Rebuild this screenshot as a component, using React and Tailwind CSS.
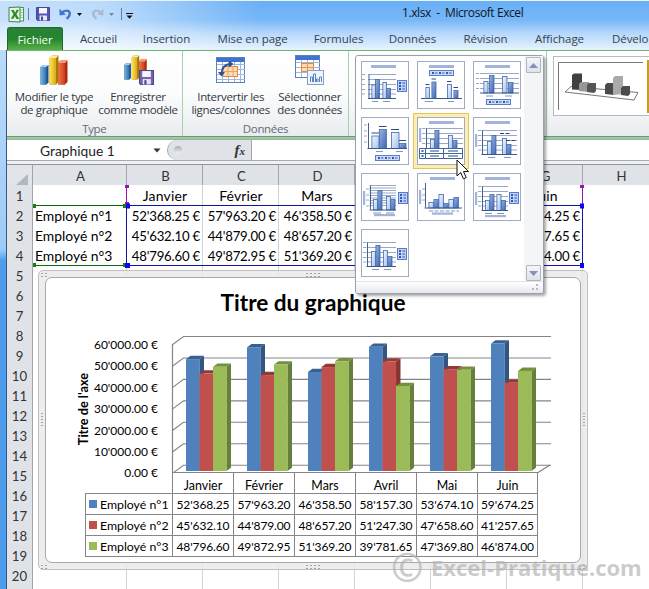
import React from "react";

const BLUE = "#4f81bd";
const RED = "#c0504d";
const GREEN = "#9bbb59";

const months = ["Janvier", "Février", "Mars", "Avril", "Mai", "Juin"];
const series = [
  { name: "Employé n°1", color: BLUE, top: "#3a608f", side: "#34557f", values: [52368.25, 57963.2, 46358.5, 58157.3, 53674.1, 59674.25] },
  { name: "Employé n°2", color: RED, top: "#913a38", side: "#843432", values: [45632.1, 44879.0, 48657.2, 51247.3, 47658.6, 41257.65] },
  { name: "Employé n°3", color: GREEN, top: "#748f3f", side: "#65803a", values: [48796.6, 49872.95, 51369.2, 39781.65, 47369.8, 46874.0] },
];

function money(v) {
  const [int, dec] = v.toFixed(2).split(".");
  return int.replace(/(\d)(?=(\d{3})+$)/g, "$1'") + "." + dec;
}

/* ---------- title bar ---------- */

function ExcelLogo() {
  return (
    <svg width="17" height="17" viewBox="0 0 17 17">
      <rect x="4.5" y="1.5" width="11" height="13.500" fill="#fff" stroke="#4d9b51" />
      <path d="M11 4h4M11 6.5h4M11 9h4M11 11.5h4" stroke="#8cc48d" />
      <path d="M1 1.500L12 1v15L1 15.500z" fill="#e7f4e3" stroke="#3c8a40" />
      <path d="M3 4h2.8l1.3 2.7L8.7 3.7h2.4L8.4 8.2l2.8 4.8H8.5L6.9 10l-1.5 2.7H2.8l2.7-4.5z" fill="#2a8a34" />
    </svg>
  );
}

function Floppy({ size, color = "#5553b5" }) {
  return (
    <svg width={size} height={size} viewBox="0 0 14 14">
      <path d="M.5.5h13v13h-12l-1-1z" fill={color} stroke="#4a479b" />
      <rect x="3" y="1" width="8" height="5.5" fill="#f4f6fd" />
      <rect x="3.5" y="8.5" width="7.5" height="5" fill="#e6e8f6" />
      <rect x="5" y="9.5" width="2" height="4" fill="#47449a" />
    </svg>
  );
}

function UndoArrow({ color, flip }) {
  return (
    <svg width="13" height="12" viewBox="0 0 13 12" className={flip ? "-scale-x-100" : ""}>
      <path d="M2.5 5.2C5 2 10.8 1.5 10.8 5.6c0 2-1.4 3.8-3.2 5.2" fill="none" stroke={color} strokeWidth="2.4" />
      <path d="M.4.8l.3 6.6 6.2-.8z" fill={color} />
    </svg>
  );
}

function Caret({ color = "#111" }) {
  return (
    <svg width="5" height="3" viewBox="0 0 5 3">
      <path d="M0 0h5L2.5 3z" fill={color} />
    </svg>
  );
}

function TitleBar() {
  return (
    <div className="flex h-[27px] shrink-0 items-center pt-px">
      <div className="flex w-[395px] items-center pl-2">
        <ExcelLogo />
        <span className="ml-[3px] h-3 w-px bg-[#5f7f9f]" />
        <span className="ml-[7px]"><Floppy size="14" /></span>
        <span className="ml-[9px]"><UndoArrow color="#3f74cf" /></span>
        <span className="ml-[5px]"><Caret /></span>
        <span className="ml-[9px]"><UndoArrow color="#aeb9c8" flip /></span>
        <span className="ml-[5px]"><Caret color="#76899e" /></span>
        <span className="ml-[7px] h-3 w-px bg-[#5f7f9f]" />
        <span className="ml-1 pt-1">
          <svg width="7" height="6" viewBox="0 0 7 6">
            <path d="M0 .5h7" stroke="#111" />
            <path d="M.5 2.5h6L3.500 5.800z" fill="#111" />
          </svg>
        </span>
      </div>
      <div className="pb-0.5 pl-[7px] text-[12px] tracking-[-0.035em] whitespace-pre text-[#10151c]">1.xlsx  -  Microsoft Excel</div>
    </div>
  );
}

function Tabs() {
  return (
    <div className="flex h-[23px] shrink-0 overflow-hidden pl-[7px] text-center text-[11.5px] leading-[24px] tracking-[-0.005em] whitespace-nowrap text-[#35424f]">
      <div className="w-[56px] shrink-0 rounded-t-[3px] border border-b-0 border-[#1d6b2a] bg-linear-to-b from-[#2c7f36] via-[#23862c] to-[#58b14a] text-white">Fichier</div>
      <div className="w-[71px] shrink-0">Accueil</div>
      <div className="w-[65px] shrink-0">Insertion</div>
      <div className="w-[107px] shrink-0">Mise en page</div>
      <div className="w-[65px] shrink-0">Formules</div>
      <div className="w-[83px] shrink-0">Données</div>
      <div className="w-[63px] shrink-0">Révision</div>
      <div className="w-[85px] shrink-0">Affichage</div>
      <div className="shrink-0 pl-2.5">Développeur</div>
    </div>
  );
}

/* ---------- ribbon ---------- */

function Bars3D({ size = 30 }) {
  return (
    <svg width={size} height={size} viewBox="0 0 30 30">
      <defs>
        <linearGradient id="rb" x2="1"><stop offset="0" stopColor="#7db5e6" /><stop offset="1" stopColor="#2f6fae" /></linearGradient>
        <linearGradient id="ry" x2="1"><stop offset="0" stopColor="#ffe45a" /><stop offset="1" stopColor="#dca814" /></linearGradient>
        <linearGradient id="rr" x2="1"><stop offset="0" stopColor="#f5784c" /><stop offset="1" stopColor="#d23a1c" /></linearGradient>
      </defs>
      <path d="M1.500 12l2-2h6v17.500l-2 2h-6z" fill="#1f4f83" />
      <path d="M1.500 12h6v17.500h-6z" fill="url(#rb)" />
      <path d="M1.500 12l2-2h6l-2 2z" fill="#a8d0f2" />
      <path d="M19 8l2.500-2.500H28.500V27L26 29.500h-7z" fill="#a92c12" />
      <path d="M19 8h7v21.500h-7z" fill="url(#rr)" />
      <path d="M19 8l2.500-2.500h7L26 8z" fill="#fa9a72" />
      <path d="M10.500 3L13 .500h6.500V27L17 29.500h-6.500z" fill="#a67c08" />
      <path d="M10.500 3H17v26.500h-6.500z" fill="url(#ry)" />
      <path d="M10.500 3L13 .500h6.500L17 3z" fill="#fff19a" />
    </svg>
  );
}

function SaveTemplateIcon() {
  return (
    <div className="relative h-[31px] w-[31px]">
      <Bars3D size={25} />
      <div className="absolute top-[15px] left-[16px]"><Floppy size="15" color="#7a62ad" /></div>
    </div>
  );
}

function SheetGlyph({ w, h, children }) {
  return (
    <>
      <rect x=".5" y=".5" width={w} height={h} fill="#fff" stroke="#5b7fc0" />
      <path d={`M1 7.5h${w}M1 12.500h${w}M1 17.500h${w}M6.500 5v${h - 5}M12.500 5v${h - 5}M18.500 5v${h - 5}`} stroke="#9db8de" />
      <rect x="1" y="1" width={w - 1} height="4" fill="#3f73cf" />
      {children}
    </>
  );
}

function SwapIcon() {
  return (
    <svg width="30" height="28" viewBox="0 0 30 28">
      <SheetGlyph w={28} h={25}>
        <path d="M1 22.500h28M24.500 5v20" stroke="#9db8de" />
        <rect x="7" y="9.500" width="14.500" height="10" fill="#fbdcb6" stroke="#e58a3a" />
        <path d="M7 14.500h14M12 10v9M17 10v9" stroke="#eda566" />
        <path d="M5.500 16.500C6 10 9.500 7.300 14.500 7" fill="none" stroke="#28529b" strokeWidth="1.800" />
        <path d="M2 15h7l-3.500 4.500zM13 3.500v7L17.500 7z" fill="#28529b" />
      </SheetGlyph>
    </svg>
  );
}

function SelectIcon() {
  return (
    <svg width="30" height="31" viewBox="0 0 30 31">
      <SheetGlyph w={24} h={22}>
        <rect x="6.500" y="8.500" width="12" height="8" fill="#fbdcb6" stroke="#e58a3a" />
        <path d="M7 12.500h12M12.500 9v8" stroke="#e9964c" />
      </SheetGlyph>
      <rect x="12.500" y="15.500" width="16" height="14" fill="#eef4fc" stroke="#8ba0c0" />
      <path d="M15.500 27v-5h2v5M18.500 27v-8h2v8M21.500 27v-3h1.500v3M24.500 27v-5h2v5" fill="none" stroke="#5b83c2" />
    </svg>
  );
}

function BigButton({ className, icon, lines }) {
  return (
    <div className={"flex flex-col items-center " + className}>
      <div className="flex h-[35px] items-start">{icon}</div>
      {lines.map((l) => (
        <div key={l} className="h-[13px] leading-[13px] whitespace-nowrap">{l}</div>
      ))}
    </div>
  );
}

function RibbonGroup({ className, title, children }) {
  return (
    <div className={"flex flex-col border-r border-[#a9cfae] pt-1 " + className}>
      <div className="flex">{children}</div>
      <div className="mt-1 text-center leading-[17px] text-[#646b78]">{title}</div>
    </div>
  );
}

function StyleGallery() {
  return (
    <div className="mt-[5px] ml-[6px] flex h-[60px] flex-1 border border-r-0 border-[#b4bac2] bg-white pt-1 pl-1">
      <svg width="89" height="50" viewBox="0 0 89 50">
        <path d="M.5 49V1.500H85" fill="none" stroke="#777" />
        <path d="M13 25.500l-6 5.500 69 8 4-7.500z" fill="#fff" stroke="#777" />
        <path d="M14 14l2-1.500h8v16.500l-10-.500z" fill="#414141" />
        <path d="M21 23l2-2h8v10l-10-1z" fill="#989898" />
        <path d="M29 24l2-2h7v8l-2 2-7-1z" fill="#555" />
        <path d="M47 24l2-2h7v12l-9-1z" fill="#4a4a4a" />
        <path d="M55 17l2-2h8v18l-10 1z" fill="#aaa" />
        <path d="M63 27l2-2h7v8l-2 2-7-1z" fill="#4c4c4c" />
      </svg>
      <div className="h-[53px] w-0.5 -translate-y-px bg-[#c99a25]" />
    </div>
  );
}

function Ribbon() {
  return (
    <div className="flex h-[89px] shrink-0 flex-col border-t border-[#6cb56c]">
      <div className="flex h-[85px] bg-linear-to-b from-white via-[#fbfcfc] to-[#e9ecef] text-[11.5px] tracking-[-0.03em] text-[#33373f]">
        <RibbonGroup className="w-[176px]" title="Type">
          <BigButton className="w-[94px]" icon={<Bars3D size={30} />} lines={["Modifier le type", "de graphique"]} />
          <BigButton className="w-[74px]" icon={<SaveTemplateIcon />} lines={["Enregistrer", "comme modèle"]} />
        </RibbonGroup>
        <RibbonGroup className="w-[167px]" title="Données">
          <BigButton className="-mb-0.5 h-[61px] w-[96px] pt-0.5" icon={<div className="-mb-0.5"><SwapIcon /></div>} lines={["Intervertir les", "lignes/colonnes"]} />
          <BigButton className="w-[62px]" icon={<SelectIcon />} lines={["Sélectionner", "des données"]} />
        </RibbonGroup>
        <div className="w-[198px] border-r border-[#a9cfae]" />
        <StyleGallery />
      </div>
      <div className="h-[3px] border-t border-[#679f6e] bg-[#9bcb9f]" />
    </div>
  );
}

function FormulaBar() {
  return (
    <div className="flex h-[26px] shrink-0 flex-col bg-[#eef0f4]">
      <div className="flex h-[22px] border-y border-[#a4a8b0] bg-white">
        <div className="flex w-[160px] items-center justify-between pr-[6px] pl-[33px] font-['Lato',sans-serif] text-[13.8px] text-[#222]">
          <span className="pt-0.5">Graphique 1</span>
          <svg width="8" height="5" viewBox="0 0 8 5"><path d="M.500 .500h7L4 4.500z" fill="#333" /></svg>
        </div>
        <div className="flex w-[85px] items-center justify-between rounded-l-full border-r border-l border-[#a4a8b0] bg-[#dfe2e7] pr-1.5 pl-1.5">
          <span className="h-2 w-2 rounded-full bg-linear-to-b from-[#a9adb4] to-[#f2f3f5]" />
          <span className="font-['Liberation_Serif',serif] text-[15px] leading-none font-bold text-[#333] italic">f<span className="text-[11px]">x</span></span>
        </div>
      </div>
      <div className="h-[4px] border-b border-[#90959d]" />
    </div>
  );
}

/* ---------- worksheet ---------- */

const cellGrid = "grid h-5 grid-cols-[26px_94px_76px_76px_76px_76px_76px_76px_76px]";

function Sheet() {
  const rows = Array.from({ length: 21 }, (_, i) => i + 1);
  return (
    <div className="w-[652px] shrink-0 font-['Lato',sans-serif] text-[13.2px] leading-[22px] whitespace-nowrap text-black">
      <div className={cellGrid}>
        <div className="flex items-end justify-end border-r border-b border-[#9ea5ae] bg-[#e1e4e9] pr-1 pb-[3px]">
          <svg width="12" height="11" viewBox="0 0 12 11"><path d="M12 0v11H0z" fill="#b3b8c0" /></svg>
        </div>
        {"ABCDEFGH".split("").map((c) => (
          <div key={c} className="border-r border-b border-[#9ea5ae] bg-[#dfe3e8] pl-0.5 text-center leading-[23px] text-[#333]">{c}</div>
        ))}
      </div>
      {rows.map((r) => (
        <div key={r} className={cellGrid}>
          <div className="border-r border-b border-[#9ea5ae] bg-[#dfe3e8] text-center text-[#333]">{r}</div>
          <div className="border-r border-b border-[#d0d3d8] bg-white pl-0.5 text-[13.9px]">{r > 1 && r < 5 ? series[r - 2].name : ""}</div>
          {months.map((m, i) => (
            <div key={m} className={"border-r border-b border-[#d0d3d8] bg-white " + (r === 1 ? "pl-px text-center text-[14px] tracking-[0.01em]" : "pr-0.5 text-right tracking-[-0.015em]")}>
              {r === 1 ? m : r < 5 ? money(series[r - 2].values[i]) + " €" : ""}
            </div>
          ))}
          <div className="border-r border-b border-[#d0d3d8] bg-white" />
        </div>
      ))}
    </div>
  );
}

/* Coloured outlines that mark the ranges feeding the chart */
function RangeOutlines() {
  return (
    <svg className="absolute top-[185px] left-[32px]" width="560" height="84" viewBox="0 0 560 84">
      <path d="M94.500 2v18M550.500 2v18" stroke="#9a13b0" />
      <path d="M93 0h4v3h-4zM93 17h4v3h-4zM548 0h4v3h-4z" fill="#9a13b0" />
      <path d="M2 20.500h92M2 80.500h92" stroke="#0c6b0c" />
      <path d="M1 19h3v4H1zM91 19h3v4h-3zM1 78h3v4H1zM91 78h3v4h-3z" fill="#168016" />
      <path d="M94.500 20.500h456v60h-456z" fill="none" stroke="#1414a0" />
      <path d="M94 18.500h4v5h-4zM93 78h5v5h-5zM548 18.500h4v5h-4zM548 78h4v5h-4z" fill="#0a0af0" />
    </svg>
  );
}

/* ---------- chart ---------- */

function Plot() {
  // Origin of the drawing is the top-left of the 3-D walls.
  const steps = [0, 1, 2, 3, 4, 5, 6];
  const base = 137;
  return (
    <svg width="382" height="139" viewBox="0 0 382 139" className="block shrink-0">
      {steps.map((i) => (
        <path key={i} d={`M2 ${11 + i * 21.45}L13.500 ${2.500 + i * 21.45}H381`} fill="none" stroke="#858585" strokeWidth="1.100" />
      ))}
      <path d="M2.500 10.500V139M2 138.500H368L380 131" fill="none" stroke="#858585" strokeWidth="1.200" />
      {months.map((m, g) =>
        series.map((s, k) => {
          const x = 16 + g * 61 + k * 13.500;
          const h = s.values[g] * 0.002136;
          const y = base - h;
          return (
            <g key={m + s.name}>
              <path d={`M${x + 13.500} ${y}l4.500 -3.300v${h}l-4.500 3.300z`} fill={s.side} />
              <path d={`M${x} ${y}l4.500 -3.300h13.500l-4.500 3.300z`} fill={s.top} />
              <rect x={x} y={y} width="13.700" height={h} fill={s.color} />
            </g>
          );
        })
      )}
    </svg>
  );
}

function DataTable() {
  return (
    <div className="ml-[39px] grid w-[454px] grid-cols-[87px_61px_61px_61px_61px_61px_61px] text-center text-[12px] leading-[21px] whitespace-nowrap">
      <div className="h-[21px] border-b border-[#868686]" />
      {months.map((m, i) => (
        <div key={m} className={"h-[21px] border-b border-l border-[#868686] pt-0.5 text-[12.4px] " + (i === 5 ? "border-r" : "")}>{m}</div>
      ))}
      {series.map((s) => (
        <React.Fragment key={s.name}>
          <div className="flex h-[21px] items-center border-b border-l border-[#868686] pl-[3px] text-[12.300px]">
            <span className="mr-[3px] h-2 w-2 shrink-0" style={{ backgroundColor: s.color }} />
            {s.name}
          </div>
          {s.values.map((v, i) => (
            <div key={i} className={"h-[21px] border-b border-l border-[#868686] tracking-[-0.01em] " + (i === 5 ? "border-r" : "")}>{money(v)}</div>
          ))}
        </React.Fragment>
      ))}
    </div>
  );
}

function Dots({ className, vertical }) {
  return (
    <div className={"absolute grid gap-0.5 " + (vertical ? "grid-cols-1 " : "grid-flow-col grid-rows-2 ") + className}>
      {Array.from({ length: vertical ? 5 : 8 }, (_, i) => (
        <span key={i} className="h-px w-0.5 bg-[#a5a5a5]" />
      ))}
    </div>
  );
}

function Chart() {
  const ticks = [60000, 50000, 40000, 30000, 20000, 10000, 0];
  return (
    <div className="absolute top-[270px] left-[38px] h-[300px] w-[550px] rounded-[5px] border border-[#c0c0c0] bg-[#e9e9e9]/80 p-1.5 font-['Lato',sans-serif] text-black">
      <div className="flex h-full flex-col rounded-[7px] border border-[#a8a8a8] bg-white">
        <div className="h-[56px] pt-[10px] text-center text-[22.600px] leading-[29px] font-bold">Titre du graphique</div>
        <div className="flex h-[139px]">
          <div className="flex w-[49px] items-center justify-end pt-[11px]">
            <span className="rotate-180 pl-1 text-[12.700px] leading-[15px] font-bold whitespace-nowrap [writing-mode:vertical-rl]">Titre de l'axe</span>
          </div>
          <div className="flex w-[63px] flex-col items-end text-[12px] leading-[21.4px] whitespace-nowrap">
            {ticks.map((t) => (
              <div key={t} className="h-[21.4px] shrink-0">{t ? money(t) : "0.00"} €</div>
            ))}
          </div>
          <div className="ml-[12px]"><Plot /></div>
        </div>
        <DataTable />
      </div>
      <Dots className="top-0.5 left-[267px]" />
      <Dots className="top-[294px] left-[267px]" />
      <Dots className="top-[142px] left-0.5" vertical />
      <Dots className="top-[142px] right-0.5" vertical />
      <Dots className="top-0.5 left-0.5 w-2 overflow-hidden" />
      <Dots className="right-0 bottom-0 w-2 overflow-hidden" />
      <Dots className="bottom-0 left-0.5 w-2 overflow-hidden" />
    </div>
  );
}

/* ---------- layout gallery ---------- */

const layouts = [
  { title: 10, axis: 8, grid: [13.5, 18.5, 23.5, 28.5, 33], ticks: 1, end: 35, base: 37, bars: [[10.5, 23.5, 4], [14, 18, 4.5], [21.5, 21, 4], [25.5, 27, 4]], marks: [[11, 6], [22, 7]], vlegend: 36 },
  { title: 12, hlegend: [12, 9], start: 4, end: 45, base: 37, bars: [[8.5, 26, 4], [14.5, 20.5, 4.5], [30, 23, 4.5], [36.5, 29, 4.5]], caps: true, marks: [[8, 8], [31, 6]] },
  { title: 12, grid: [12.5, 17.5, 22.5, 27.5], start: 7, ticks: 3, end: 46, base: 31.5, bars: [[10.5, 20, 4.5], [16, 14, 5], [29, 15, 5], [35, 21, 5]], marks: [[13, 7], [32, 7]], hlegend: [13, 38] },
  { axis: 7.5, axisTop: 6, tickRows: [8, 14, 19, 25], ticks: 3, end: 46, base: 31, bars: [[10.5, 18.5, 7.5], [18, 12, 7.5], [30, 15, 8], [38, 26, 7]], caps: true, marks: [[15, 7], [35, 7]], hlegend: [14, 38] },
  { title: 12, vtitle: [11, 14], axis: 9.5, grid: [11.5, 16.5, 21.5, 26.5], ticks: 5, end: 46, base: 31, bars: [[13, 22, 4.5], [17.5, 13, 4.5], [31, 18, 4.5], [35.5, 23, 4.5]], table: true },
  { title: 12, vtitle: [17, 13], axis: 9.5, grid: [13.5, 18.5, 23.5, 28.5, 33], ticks: 5, end: 44, base: 37, bars: [[14, 24, 4.5], [18.5, 18, 4.5], [29, 21, 4.5], [33.5, 27, 4.5]], marks: [[15, 7], [31, 7]], notes: [[27, 16.5], [33, 23.5]] },
  { vtitle: [18, 14], axis: 9.5, grid: [12.5, 15, 17.5, 20, 22.5, 25, 27.5, 30, 32.5], ticks: 5, tickRows: [16, 22, 27, 33], end: 35, base: 36.5, bars: [[12, 26, 4.5], [16.5, 17, 4.5], [25, 23, 4.5], [29.5, 26, 4.5]], marks: [[12, 8], [25, 8]], vlegend: 37, foot: [13, 41] },
  { title: 13, vtitle: [17, 14], axis: 8.5, axisTop: 10, tickRows: [16, 22, 27], ticks: 5, end: 45, base: 34.5, bars: [[11.5, 29, 5], [16.5, 26, 5], [21.5, 21, 5], [26.5, 30, 5], [31.5, 26, 5], [36.5, 24, 5]], marks: [[12, 30]], foot: [15, 39.5] },
  { title: 12, vtitle: [19, 13], axis: 9.5, grid: [13.5, 18.5, 23.5, 28.5, 33], ticks: 5, end: 35, base: 37, bars: [[12, 27, 4.5], [16.5, 21, 4.5], [23.5, 21, 4.5], [28, 27, 4.5]], marks: [[12, 7], [24, 7]], vlegend: 36, foot: [12, 42] },
  { axis: 6.5, grid: [13.5, 18.5, 23.5, 28.5, 33], ticks: 2, end: 35, base: 37, bars: [[10, 22, 4.5], [14.5, 16, 4.5], [22, 21, 4.5], [26.5, 27, 4.5]], marks: [[11, 7], [23, 7]], vlegend: 36 },
];

function LayoutThumb({ l }) {
  const start = l.start ?? l.axis - 1;
  const tickRows = l.tickRows ?? l.grid ?? [];
  return (
    <svg width="46" height="46" viewBox="1 1 46 46">
      {l.title && <rect x={l.title} y="4" width="25" height="3" fill="#a3b4da" />}
      {l.vtitle && <rect x="2" y={l.vtitle[0]} width="2.200" height={l.vtitle[1]} fill="#a3b4da" />}
      {l.foot && <rect x={l.foot[0]} y={l.foot[1]} width="21" height="2.200" fill="#a3b4da" />}
      {(l.grid ?? []).map((y) => <path key={y} d={`M${start} ${y}H${l.end}`} stroke="#7c93b8" strokeWidth=".8" />)}
      {l.ticks && tickRows.map((y) => <path key={y} d={`M${l.ticks} ${y}h3`} stroke="#7c93b8" strokeWidth=".8" />)}
      {l.axis && <path d={`M${l.axis} ${l.axisTop ?? l.grid[0]}V${l.base}`} stroke="#41618f" />}
      {l.bars.map(([x, y, w], i) => (
        <g key={x}>
          <rect x={x + 0.4} y={y + 0.5} width={w - 0.4} height={l.base - y} fill={i % 2 ? "url(#barDark)" : "url(#barLight)"} stroke="#426bab" strokeWidth=".8" />
          {l.caps && <path d={`M${x} ${y - 2.500}h${w}`} stroke="#2b4a80" />}
        </g>
      ))}
      <path d={`M${start} ${l.base + 0.5}H${l.end}`} stroke="#3b588a" />
      {(l.marks ?? []).map(([x, w]) => <path key={x} d={`M${x} ${l.base + 3.500}h${w}`} stroke="#8296ba" strokeDasharray={w > 20 ? "4 1.500" : undefined} />)}
      {(l.notes ?? []).map(([x, y]) => <path key={x} d={`M${x} ${y}h10`} stroke="#2b4a80" strokeDasharray="4 1.500" />)}
      {l.hlegend && (
        <g transform={`translate(${l.hlegend[0]} ${l.hlegend[1]})`}>
          <rect x=".5" y=".5" width="24" height="5" fill="#cbdcfb" stroke="#5a7ccb" />
          <path d="M3 3h2M10 3h2M17 3h2" stroke="#3159ad" strokeWidth="2" />
          <path d="M6 3h2.500M13 3h2.500M20 3h2.500" stroke="#3159ad" />
        </g>
      )}
      {l.vlegend && (
        <g transform={`translate(${l.vlegend} 19)`}>
          <rect x=".5" y=".5" width="9" height="11" fill="#bcd0f8" stroke="#5a7ccb" />
          <path d="M2 3h2M2 6h2M2 9h2" stroke="#3159ad" strokeWidth="1.800" />
          <path d="M5.500 3H8M5.500 6H8M5.500 9H8" stroke="#3159ad" />
        </g>
      )}
      {l.table && (
        <g>
          <path d="M2.500 31.500h43v10h-43zM2.500 36.500h43M8.500 31.500v10M26.500 31.500v10" fill="#fff" stroke="#41669f" />
          <path d="M13 34h9M31 34h10M13 39h9M31 39h10" stroke="#2b4a80" />
          <path d="M4.500 34h2M4.500 39h2" stroke="#3e69bd" strokeWidth="2" />
        </g>
      )}
    </svg>
  );
}

function ScrollButton({ up }) {
  return (
    <div className="flex h-4 w-[15px] items-center justify-center rounded-[1px] border border-[#b3b5bb] bg-linear-to-b from-[#f5f6f8] to-[#dfe2e8]">
      <svg width="9" height="5" viewBox="0 0 9 5"><path d={up ? "M0 5h9L4.500 0z" : "M0 0h9L4.500 5z"} fill="#7e93bd" /></svg>
    </div>
  );
}

function LayoutMenu() {
  return (
    <div className="absolute top-[55px] left-[355px] flex h-[239px] w-[189px] flex-col rounded-[3px] border border-[#9aa0ab] bg-white shadow-[2px_2px_3px_rgba(0,0,0,0.35)]">
      <svg width="0" height="0" className="absolute">
        <defs>
          <linearGradient id="barLight" x2="1" y2="1"><stop offset="0" stopColor="#f4f9ff" /><stop offset="1" stopColor="#a3c0ee" /></linearGradient>
          <linearGradient id="barDark" x2="1" y2="1"><stop offset="0" stopColor="#9db4e2" /><stop offset="1" stopColor="#3c62b4" /></linearGradient>
        </defs>
      </svg>
      <div className="flex h-[225px]">
        <div className="grid w-[168px] grid-cols-[48px_48px_48px] content-start gap-2 pt-[5px] pl-[5px]">
          {layouts.map((l, i) => (
            <div key={i} className={"h-12 w-12 border border-[#a0abc3] bg-white " + (i === 4 ? "shadow-[0_0_0_3px_#fbeeb0,0_0_0_4px_#e3c55c]" : "")}>
              <LayoutThumb l={l} />
            </div>
          ))}
        </div>
        <div className="flex w-[19px] flex-col items-center justify-between bg-[#f4f5f7] pt-px">
          <ScrollButton up />
          <ScrollButton />
        </div>
      </div>
      <div className="flex flex-1 items-end justify-end rounded-b-[3px] border-t border-[#e2e4ea] bg-linear-to-b from-white to-[#e6e8ee] pr-1 pb-0.5">
        <svg width="8" height="8" viewBox="0 0 8 8"><path d="M5 1h2v2H5zM5 5h2v2H5zM1 5h2v2H1z" fill="#b6bac4" /></svg>
      </div>
    </div>
  );
}

function Cursor() {
  return (
    <svg className="absolute top-[159px] left-[456px]" width="14" height="21" viewBox="0 0 14 21">
      <path d="M1 1v16l3.700-3.500 2.700 6.300 2.800-1.200-2.700-6.100H12.500z" fill="#fff" stroke="#111" />
    </svg>
  );
}

export default function App() {
  return (
    <div className="relative flex h-[589px] w-[649px] flex-col overflow-hidden bg-[linear-gradient(100deg,rgba(255,255,255,0.6)_0px,rgba(255,255,255,0.55)_100px,rgba(255,255,255,0)_260px),linear-gradient(180deg,#68aef5_0px,#76b7f8_20px,#b4d7fb_33px,#e8f3fe_50px)] font-['Open_Sans',sans-serif]">
      <div className="absolute inset-x-0 top-0 h-px bg-[#e8f3fd]" />
      <TitleBar />
      <Tabs />
      <div className="flex min-h-0 flex-1">
        <div className="w-[7px] shrink-0 border-r border-[#37587c] bg-linear-to-b from-[#b9dbfa] via-[#9dcbf8] via-[37%] to-[#4e9dec] to-[39%]" />
        <div className="flex min-w-0 flex-1 flex-col">
          <Ribbon />
          <FormulaBar />
          <Sheet />
        </div>
      </div>
      <RangeOutlines />
      <Chart />
      <LayoutMenu />
      <Cursor />
      <div className="absolute top-[552px] left-[391px] flex items-center font-['Open_Sans',sans-serif] leading-[30px] font-bold whitespace-nowrap text-[#b4b4b4]/70">
        <span className="w-[40px] text-[39px] font-semibold">©</span>
        <span className="text-[22px]">Excel-Pratique.com</span>
      </div>
    </div>
  );
}
